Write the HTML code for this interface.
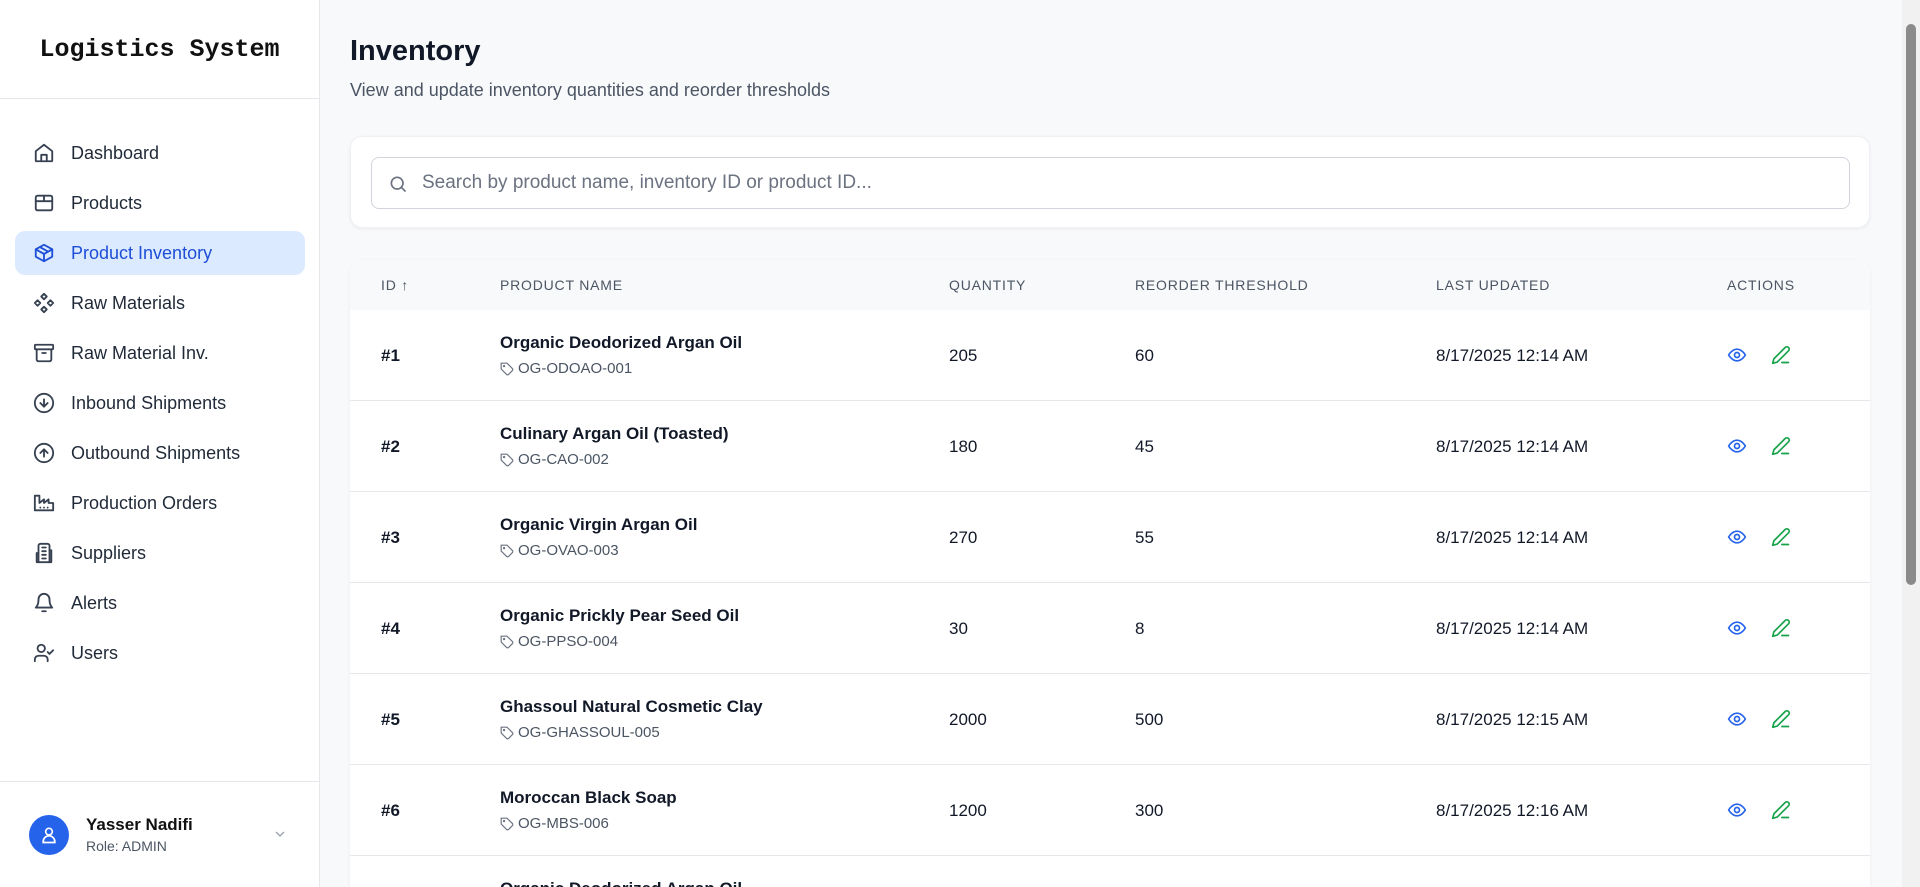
<!DOCTYPE html>
<html><head><meta charset="utf-8"><style>
*{box-sizing:border-box;margin:0;padding:0}
html,body{width:1920px;height:887px;overflow:hidden}
body{background:#f8f9fb;font-family:"Liberation Sans",sans-serif;color:#111827;position:relative}
.side{position:absolute;left:0;top:0;width:320px;height:887px;background:#fff;border-right:1px solid #e5e7eb}
.logo{height:99px;border-bottom:1px solid #e5e7eb;display:flex;align-items:center;justify-content:center;font-family:"Liberation Mono",monospace;font-weight:bold;font-size:25px;color:#111}
.nav{position:absolute;top:131px;left:15px;width:290px}
.item{height:44px;margin-bottom:6px;display:flex;align-items:center;padding-left:18px;font-size:18px;color:#1f2937;border-radius:10px}
.item svg{width:22px;height:22px;margin-right:16px;stroke:#374151;fill:none;stroke-width:2;stroke-linecap:round;stroke-linejoin:round}
.item.act{background:#dbeafe;color:#1d4ed8}
.item.act svg{stroke:#1d4ed8}
.foot{position:absolute;left:0;top:781px;width:319px;height:106px;border-top:1px solid #e5e7eb}
.av{position:absolute;left:29px;top:33px;width:40px;height:40px;border-radius:50%;background:#2563eb;display:flex;align-items:center;justify-content:center}
.nm{position:absolute;left:86px;top:33px;font-size:17px;font-weight:bold;color:#111}
.rl{position:absolute;left:86px;top:56px;font-size:14px;color:#4b5563}
.chev{position:absolute;left:272px;top:44px}
h1{position:absolute;left:350px;top:35px;font-size:29px;font-weight:bold;color:#111827}
.sub{position:absolute;left:350px;top:80px;font-size:18px;color:#4b5563}
.scard{position:absolute;left:350px;top:136px;width:1520px;height:92px;background:#fff;border:1px solid #eef0f3;border-radius:12px;box-shadow:0 1px 3px rgba(0,0,0,.06)}
.inp{position:absolute;left:20px;top:20px;width:1479px;height:52px;border:1px solid #d1d5db;border-radius:8px}
.inp svg{position:absolute;left:16px;top:16px}
.inp span{position:absolute;left:50px;top:14px;font-size:19px;color:#6b7280}
.tcard{position:absolute;left:350px;top:260px;width:1520px;height:627px;background:#fff;border-radius:12px 12px 0 0;box-shadow:0 1px 3px rgba(0,0,0,.06);overflow:hidden}
.th{height:50px;background:#f8f9fb;position:relative;font-size:14px;color:#4b5563;letter-spacing:.8px}
.th div{position:absolute;top:17px}
.row{height:91px;border-bottom:1px solid #e5e7eb;position:relative;font-size:17px}
.row>div{position:absolute}
.c0{left:31px}.c1{left:150px}.c2{left:599px}.c3{left:785px}.c4{left:1086px}.c5{left:1377px}
.row .id{top:36px;font-weight:bold}
.row .pn{top:23px;font-weight:bold;font-size:17px}
.row .sku{top:50px;font-size:15px;color:#4b5563;display:flex;align-items:center;gap:4px}
.row .v{top:36px}
.row .act{top:35px;display:flex;gap:24px}
.sb{position:absolute;right:0;top:0;width:18px;height:887px;background:#f1f1f1}
.sb div{position:absolute;left:4px;top:24px;width:10px;height:561px;background:#8a8a8a;border-radius:5px}
</style></head><body>
<div class="side">
<div class="logo">Logistics System</div>
<div class="nav">
<div class="item"><svg viewBox="0 0 24 24"><path d="M3 10l9-7 9 7v10a1 1 0 0 1-1 1H4a1 1 0 0 1-1-1z"/><path d="M9 21v-7h6v7"/></svg>Dashboard</div>
<div class="item"><svg viewBox="0 0 24 24"><rect x="3" y="4" width="18" height="16" rx="2"/><path d="M3 10h18M12 4v6"/></svg>Products</div>
<div class="item act"><svg viewBox="0 0 24 24"><path d="M21 8l-9-5-9 5v8l9 5 9-5z"/><path d="M3 8l9 5 9-5M12 13v8M7.5 5.5l9 5"/></svg>Product Inventory</div>
<div class="item"><svg viewBox="0 0 24 24"><path d="M12 2l3 3-3 3-3-3zM19 9l3 3-3 3-3-3zM5 9l3 3-3 3-3-3zM12 16l3 3-3 3-3-3z"/></svg>Raw Materials</div>
<div class="item"><svg viewBox="0 0 24 24"><rect x="2" y="3" width="20" height="5" rx="1"/><path d="M4 8v11a2 2 0 0 0 2 2h12a2 2 0 0 0 2-2V8M10 12h4"/></svg>Raw Material Inv.</div>
<div class="item"><svg viewBox="0 0 24 24"><circle cx="12" cy="12" r="10"/><path d="M12 8v8M8 12l4 4 4-4"/></svg>Inbound Shipments</div>
<div class="item"><svg viewBox="0 0 24 24"><circle cx="12" cy="12" r="10"/><path d="M12 16V8M8 12l4-4 4 4"/></svg>Outbound Shipments</div>
<div class="item"><svg viewBox="0 0 24 24"><path d="M2 20V4h5v8l5-4v4l5-4v4h5v8z"/><path d="M8 17h.01M12 17h.01M16 17h.01"/></svg>Production Orders</div>
<div class="item"><svg viewBox="0 0 24 24"><path d="M6 22V4a2 2 0 0 1 2-2h8a2 2 0 0 1 2 2v18z"/><path d="M6 12H4v10h2M18 9h2v13h-2M10 6h4M10 10h4M10 14h4M10 18h4"/></svg>Suppliers</div>
<div class="item"><svg viewBox="0 0 24 24"><path d="M6 8a6 6 0 0 1 12 0c0 7 3 9 3 9H3s3-2 3-9"/><path d="M10 21h4"/></svg>Alerts</div>
<div class="item"><svg viewBox="0 0 24 24"><circle cx="9" cy="7" r="4"/><path d="M2 21v-2a4 4 0 0 1 4-4h6a4 4 0 0 1 4 4v2M16 11l2 2 4-4"/></svg>Users</div>
</div>
<div class="foot">
<div class="av"><svg width="20" height="20" viewBox="0 0 24 24" fill="none" stroke="#fff" stroke-width="2"><circle cx="12" cy="8" r="4"/><path d="M5 21v-1a6 6 0 0 1 14 0v1z"/></svg></div>
<div class="nm">Yasser Nadifi</div>
<div class="rl">Role: ADMIN</div>
<svg class="chev" width="16" height="16" viewBox="0 0 24 24" fill="none" stroke="#9ca3af" stroke-width="2"><path d="M6 9l6 6 6-6"/></svg>
</div>
</div>
<h1>Inventory</h1>
<div class="sub">View and update inventory quantities and reorder thresholds</div>
<div class="scard"><div class="inp"><svg width="20" height="20" viewBox="0 0 24 24" fill="none" stroke="#6b7280" stroke-width="2"><circle cx="11" cy="11" r="7"/><path d="M21 21l-5-5"/></svg><span>Search by product name, inventory ID or product ID...</span></div></div>
<div class="tcard">
<div class="th"><div class="c0">ID ↑</div><div class="c1">PRODUCT NAME</div><div class="c2">QUANTITY</div><div class="c3">REORDER THRESHOLD</div><div class="c4">LAST UPDATED</div><div class="c5">ACTIONS</div></div>
<div id="rows"></div>
</div>
<div class="sb"><div></div></div>
<script>
var d=[["1","Organic Deodorized Argan Oil","OG-ODOAO-001","205","60","12:14"],["2","Culinary Argan Oil (Toasted)","OG-CAO-002","180","45","12:14"],["3","Organic Virgin Argan Oil","OG-OVAO-003","270","55","12:14"],["4","Organic Prickly Pear Seed Oil","OG-PPSO-004","30","8","12:14"],["5","Ghassoul Natural Cosmetic Clay","OG-GHASSOUL-005","2000","500","12:15"],["6","Moroccan Black Soap","OG-MBS-006","1200","300","12:16"],["7","Organic Deodorized Argan Oil","OG-ODOAO-007","100","20","12:16"]];
var tag='<svg width="14" height="14" viewBox="0 0 24 24" fill="none" stroke="#6b7280" stroke-width="2"><path d="M12 2H2v10l9.3 9.3a2.4 2.4 0 0 0 3.4 0l6.6-6.6a2.4 2.4 0 0 0 0-3.4z"/><circle cx="7" cy="7" r="1"/></svg>';
var eye='<svg width="20" height="20" viewBox="0 0 24 24" fill="none" stroke="#2563eb" stroke-width="2"><path d="M2 12s4-7 10-7 10 7 10 7-4 7-10 7S2 12 2 12z"/><circle cx="12" cy="12" r="3"/></svg>';
var pen='<svg width="20" height="20" viewBox="0 0 24 24" fill="none" stroke="#16a34a" stroke-width="2" stroke-linecap="round" stroke-linejoin="round"><path d="M17 3a2.8 2.8 0 1 1 4 4L7.5 20.5 2 22l1.5-5.5z"/><path d="M13 21h8"/></svg>';
var h='';d.forEach(function(r){h+='<div class="row"><div class="c0 id">#'+r[0]+'</div><div class="c1 pn">'+r[1]+'</div><div class="c1 sku">'+tag+r[2]+'</div><div class="c2 v">'+r[3]+'</div><div class="c3 v">'+r[4]+'</div><div class="c4 v">8/17/2025 '+r[5]+' AM</div><div class="c5 act">'+eye+pen+'</div></div>'});
document.getElementById('rows').innerHTML=h;
</script>
</body></html>
